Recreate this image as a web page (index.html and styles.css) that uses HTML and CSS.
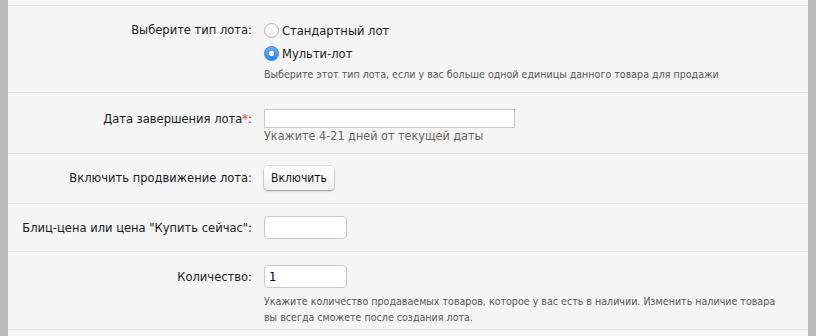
FILE: index.html
```html
<!DOCTYPE html>
<html lang="ru">
<head>
    <meta charset="UTF-8">
    <title>Создание лота</title>
    <link rel="stylesheet" href="styles.css">
</head>
<body>
    <div class="page">
        <div class="row row-top"></div>

        <div class="row">
            <div class="label">Выберите тип лота:</div>
            <div class="field">
                <label class="option"><input type="radio" name="lot_type"> Стандартный лот</label>
                <label class="option"><input type="radio" name="lot_type" checked> Мульти-лот</label>
                <div class="hint">Выберите этот тип лота, если у вас больше одной единицы данного товара для продажи</div>
            </div>
        </div>

        <div class="row row-date">
            <div class="label">Дата завершения лота<span class="req">*</span>:</div>
            <div class="field">
                <input type="text" class="input input-wide">
                <div class="hint hint-big">Укажите 4-21 дней от текущей даты</div>
            </div>
        </div>

        <div class="row row-promo">
            <div class="label">Включить продвижение лота:</div>
            <div class="field">
                <button type="button" class="btn">Включить</button>
            </div>
        </div>

        <div class="row row-price">
            <div class="label">Блиц-цена или цена "Купить сейчас":</div>
            <div class="field">
                <input type="text" class="input input-small">
            </div>
        </div>

        <div class="row row-qty">
            <div class="label">Количество:</div>
            <div class="field">
                <input type="text" class="input input-small" value="1">
                <div class="hint hint-qty">Укажите количество продаваемых товаров, которое у вас есть в наличии. Изменить наличие товара вы всегда сможете после создания лота.</div>
            </div>
        </div>
    </div>
</body>
</html>
```

FILE: styles.css
```css
body {
    margin: 0;
    background: #bcbcbc;
    font-family: "DejaVu Sans Condensed", "DejaVu Sans", Verdana, sans-serif;
    font-stretch: condensed;
    font-size: 12.8px;
    color: #1a1a1a;
}
.page {
    margin: 0 8px;
    background: #f5f5f5;
    min-height: 336px;
}
.row {
    display: grid;
    grid-template-columns: 244px 1fr;
    column-gap: 12px;
    border-bottom: 1px solid #e2e2e2;
    border-top: 1px solid #fbfbfb;
    padding: 13px 0 11px;
}
.row-top {
    display: block;
    height: 5px;
    padding: 0;
    border-top: none;
}
.label {
    text-align: right;
    line-height: 20px;
}
.req {
    color: #f03c1e;
}
.field {
    min-width: 0;
}
.option {
    display: flex;
    align-items: center;
    height: 20px;
    margin-bottom: 3px;
}
.option input {
    appearance: none;
    -webkit-appearance: none;
    width: 15px;
    height: 15px;
    margin: 0 3px 0 0;
    border-radius: 50%;
    border: 1px solid #b3b3b3;
    background: linear-gradient(#ffffff, #f3f3f3);
    box-sizing: border-box;
}
.option input:checked {
    border-color: #3584ec;
    background: radial-gradient(circle, #fff 0 2.4px, transparent 3px), linear-gradient(#64adfb, #2f83f2);
}
.hint {
    font-size: 10.6px;
    line-height: 14px;
    color: #555;
    margin-top: 4px;
}
.hint-big {
    font-size: 12.5px;
    line-height: 16px;
    margin-top: 0;
    color: #666;
}
.hint-qty {
    line-height: 16px;
    margin-top: 5px;
    max-width: 516px;
}
.input {
    display: block;
    box-sizing: border-box;
    border: 1px solid #c9c9c9;
    background: #fff;
    font-family: inherit;
    font-size: 13px;
    padding: 2px 4px;
    margin: 0;
    color: #000;
}
.input-wide {
    width: 251px;
    height: 19px;
}
.input-small {
    width: 83px;
    height: 23px;
    border-radius: 4px;
}
.row-date {
    padding: 15px 0 9px;
}
.row-date .label {
    line-height: 19px;
}
.row-promo {
    padding: 11px 0 13px;
}
.row-promo .label {
    line-height: 24px;
}
.btn {
    font-family: inherit;
    font-size: 12px;
    color: #111;
    height: 24px;
    padding: 0 7px;
    border: none;
    border-radius: 4px;
    background: linear-gradient(#ffffff, #f1f1f1);
    box-shadow: 0 0 0 0.5px rgba(0,0,0,0.15), 0 1px 2px rgba(0,0,0,0.35);
    cursor: pointer;
}
.row-price {
    padding: 11px 0 12px;
}
.row-price .label,
.row-qty .label {
    line-height: 23px;
}
.row-qty {
    padding: 12px 0 4px;
}
```
